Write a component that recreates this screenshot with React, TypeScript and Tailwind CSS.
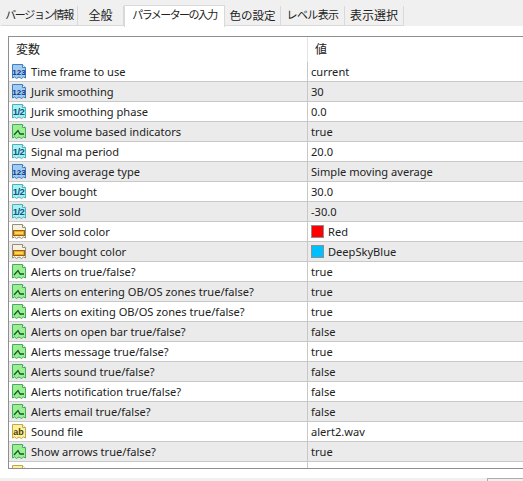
const font = "'Noto Sans', 'Noto Sans CJK JP', sans-serif"

type Kind = 'int' | 'dbl' | 'bool' | 'color' | 'str'

const palette: Record<Kind, { fill: string; stroke: string; ink: string }> = {
  int: { fill: '#a3cbf2', stroke: '#3f7fbd', ink: '#0c3c80' },
  dbl: { fill: '#aaf0ee', stroke: '#4fb0bd', ink: '#0f5585' },
  bool: { fill: '#9cee92', stroke: '#4aa860', ink: '#0f5a25' },
  color: { fill: '#f6f1e6', stroke: '#9a8d78', ink: '#e08a10' },
  str: { fill: '#fdf0a0', stroke: '#c0a848', ink: '#4a3c00' },
}

function TypeIcon({ kind, plain }: { kind: Kind; plain?: boolean }) {
  const c = palette[kind]
  return (
    <svg width="16" height="16" viewBox="0 0 16 16" className="shrink-0">
      <path
        d="M1.5 0.5H11.5L14.5 3.5V14L12.5 13L10.5 14.5L8 13L5.5 14.5L3.5 13L1.5 14Z"
        fill={c.fill}
        stroke={c.stroke}
      />
      <path d="M11.5 0.5V3.5H14.5" fill="#ffffff" stroke={c.stroke} />
      {!plain && kind === 'int' && (
        <text x="8" y="11" textAnchor="middle" fontSize="8" fontWeight="700" fill={c.ink} fontFamily="'Liberation Sans', sans-serif">123</text>
      )}
      {!plain && kind === 'dbl' && (
        <text x="7.5" y="11" textAnchor="middle" fontSize="9.5" fontWeight="700" letterSpacing="-0.6" fill={c.ink} fontFamily="'Liberation Sans', sans-serif">1/2</text>
      )}
      {!plain && kind === 'bool' && <path d="M3 11L7 6.5L9 10H13" fill="none" stroke={c.ink} strokeWidth="1.3" />}
      {!plain && kind === 'color' && (
        <>
          <rect x="2.5" y="6.5" width="11" height="5" fill="#f9a51a" stroke="#8a6420" />
          <rect x="4" y="8" width="8" height="2" fill="#ffd64d" />
        </>
      )}
      {!plain && kind === 'str' && (
        <text x="7.5" y="11" textAnchor="middle" fontSize="9" fontWeight="700" fill={c.ink} fontFamily="'Liberation Sans', sans-serif">ab</text>
      )}
    </svg>
  )
}

const rows: { kind: Kind; name: string; value: string; swatch?: string }[] = [
  { kind: 'int', name: 'Time frame to use', value: 'current' },
  { kind: 'int', name: 'Jurik smoothing', value: '30' },
  { kind: 'dbl', name: 'Jurik smoothing phase', value: '0.0' },
  { kind: 'bool', name: 'Use volume based indicators', value: 'true' },
  { kind: 'dbl', name: 'Signal ma period', value: '20.0' },
  { kind: 'int', name: 'Moving average type', value: 'Simple moving average' },
  { kind: 'dbl', name: 'Over bought', value: '30.0' },
  { kind: 'dbl', name: 'Over sold', value: '-30.0' },
  { kind: 'color', name: 'Over sold color', value: 'Red', swatch: 'bg-[#ff0000]' },
  { kind: 'color', name: 'Over bought color', value: 'DeepSkyBlue', swatch: 'bg-[#00bfff]' },
  { kind: 'bool', name: 'Alerts on true/false?', value: 'true' },
  { kind: 'bool', name: 'Alerts on entering OB/OS zones true/false?', value: 'true' },
  { kind: 'bool', name: 'Alerts on exiting OB/OS zones true/false?', value: 'true' },
  { kind: 'bool', name: 'Alerts on open bar true/false?', value: 'false' },
  { kind: 'bool', name: 'Alerts message true/false?', value: 'true' },
  { kind: 'bool', name: 'Alerts sound true/false?', value: 'false' },
  { kind: 'bool', name: 'Alerts notification true/false?', value: 'false' },
  { kind: 'bool', name: 'Alerts email true/false?', value: 'false' },
  { kind: 'str', name: 'Sound file', value: 'alert2.wav' },
  { kind: 'bool', name: 'Show arrows true/false?', value: 'true' },
]

const tabs = [
  { label: 'バージョン情報', box: 'w-[77px] text-[11px] tracking-[-1.3px]' },
  { label: '全般', box: 'w-[46px] text-[12px]' },
  { label: 'パラメーターの入力', box: 'w-[101px] text-[11px] tracking-[-1.6px]', active: true },
  { label: '色の設定', box: 'w-[56px] text-[11.5px]' },
  { label: 'レベル表示', box: 'w-[64px] text-[11px] tracking-[-0.6px]' },
  { label: '表示選択', box: 'w-[59px] text-[12px]' },
]

export default function App() {
  return (
    <div className="w-[523px] h-[481px] overflow-hidden bg-white flex flex-col text-[11.1px] text-[#222]" style={{ fontFamily: font }}>
      {/* Tabs */}
      <div className="h-[26px] shrink-0 bg-[#f0f0f0] flex items-end pl-px">
        {tabs.map((t) =>
          t.active ? (
            <div key={t.label} className={`${t.box} h-[22px] -mb-px pb-[3px] bg-white border border-b-0 border-[#d9d9d9] flex items-center justify-center whitespace-nowrap`}>
              {t.label}
            </div>
          ) : (
            <div key={t.label} className={`${t.box} h-[20px] border-r border-b border-[#d9d9d9] flex items-center justify-center whitespace-nowrap`}>
              {t.label}
            </div>
          ),
        )}
      </div>

      {/* Parameter list */}
      <div className="ml-2 mt-2.5 h-[433px] shrink-0 border-l border-t border-b border-[#8f8f8f] overflow-hidden">
        <div className="h-[25px] flex items-center text-[12px]">
          <div className="w-[298px] pl-[7px]">変数</div>
          <div className="h-full border-l border-[#e4e4e4] pl-[7px] flex items-center">値</div>
        </div>
        {rows.map((r, i) => (
          <div key={i} className={`h-5 flex border-b border-[#c8c8c8] ${i % 2 === 1 ? 'bg-[#ebebeb]' : 'bg-white'}`}>
            <div className="w-[298px] pl-[2px] flex items-center gap-[4px] whitespace-nowrap">
              <TypeIcon kind={r.kind} />
              <span className="pt-px">{r.name}</span>
            </div>
            <div className="flex-1 border-l border-[#c8c8c8] pl-[3px] flex items-center gap-[4px] whitespace-nowrap">
              {r.swatch && <span className={`w-[13px] h-[13px] border border-[#8f8f8f] ${r.swatch}`} />}
              <span className="pt-px">{r.value}</span>
            </div>
          </div>
        ))}
        {/* next row, cut off by the list's bottom edge */}
        <div className="h-5 flex bg-white">
          <div className="w-[298px] pl-[2px] pt-[3px]">
            <TypeIcon kind="str" plain />
          </div>
          <div className="flex-1 border-l border-[#c8c8c8]" />
        </div>
      </div>

      {/* Bottom strip */}
      <div className="mt-[9px] flex-1 bg-[#f0f0f0] flex justify-end">
        <div className="w-[36px] border-l border-t border-[#adadad]" />
      </div>
    </div>
  )
}
